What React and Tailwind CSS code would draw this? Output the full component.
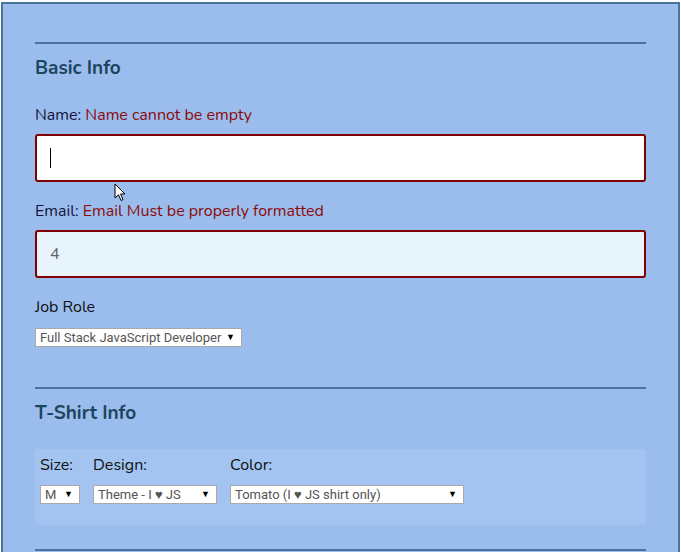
import React from 'react';

const font = { fontFamily: '"Nunito", Lato, "Noto Sans", sans-serif' };

const Select = ({ value, className }) => (
  <div
    className={`h-[19px] bg-white border border-[#a9a9a9] flex items-center justify-between pl-[4px] pr-[6px] text-[13px] text-[#555] ${className}`}
    style={{ fontFamily: 'Roboto, "Liberation Sans", sans-serif' }}
  >
    <span className="whitespace-nowrap">{value}</span>
    <span className="text-[9px] text-black">▼</span>
  </div>
);

const Cursor = () => (
  <svg width="12" height="19" viewBox="0 0 12 19" className="absolute left-[114px] top-[183px]">
    <path d="M1 1 L1 15 L4.5 11.8 L7 17.5 L9 16.6 L6.6 11 L11 11 Z" fill="white" stroke="black" strokeWidth="1" strokeLinejoin="round" />
  </svg>
);

export default function App() {
  return (
    <div className="w-[681px] h-[552px] overflow-hidden bg-white relative" style={font}>
      <div className="mt-[2px] ml-[1px] w-[679px] h-[560px] bg-[#9bbded] border-2 border-[#4a7499] px-[32px] pt-[38px]">
        <fieldset>
          <div className="h-[2px] bg-[#4a7499]" />
          <h2 className="mt-[12px] text-[19px] font-bold text-[#1d4560] leading-[24px]">Basic Info</h2>
          <div className="mt-[25px] text-[16px] leading-[20px] text-[#14143a]">
            Name: <span className="text-[#8b0a0a]">Name cannot be empty</span>
          </div>
          <div className="mt-[9px] h-[48px] bg-white border-2 border-[#800000] rounded-[3px] flex items-center pl-[13px]">
            <div className="w-[1px] h-[20px] bg-black" />
          </div>
          <div className="mt-[19px] text-[16px] leading-[20px] text-[#14143a]">
            Email: <span className="text-[#8b0a0a]">Email Must be properly formatted</span>
          </div>
          <div className="mt-[9px] h-[48px] bg-[#e8f4fb] border-2 border-[#800000] rounded-[3px] flex items-center pl-[13px] text-[16px] text-[#5a6670]">
            4
          </div>
          <div className="mt-[19px] text-[16px] leading-[20px] text-[#111]">Job Role</div>
          <Select value="Full Stack JavaScript Developer" className="mt-[11px] w-[207px]" />
          <div className="mt-[40px] h-[2px] bg-[#4a7499]" />
          <h2 className="mt-[12px] text-[19px] font-bold text-[#1d4560] leading-[24px]">T-Shirt Info</h2>
          <div className="mt-[24px] h-[76px] bg-[#a3c4f0] rounded-[4px] px-[5px] pt-[6px] flex gap-[13px] text-[16px] text-[#111]">
            <div>
              <div className="leading-[20px]">Size:</div>
              <Select value="M" className="mt-[10px] w-[40px]" />
            </div>
            <div>
              <div className="leading-[20px]">Design:</div>
              <Select value="Theme - I ♥ JS" className="mt-[10px] w-[124px]" />
            </div>
            <div>
              <div className="leading-[20px]">Color:</div>
              <Select value="Tomato (I ♥ JS shirt only)" className="mt-[10px] w-[234px]" />
            </div>
          </div>
          <div className="mt-[24px] h-[2px] bg-[#4a7499]" />
        </fieldset>
      </div>
      <Cursor />
    </div>
  );
}
